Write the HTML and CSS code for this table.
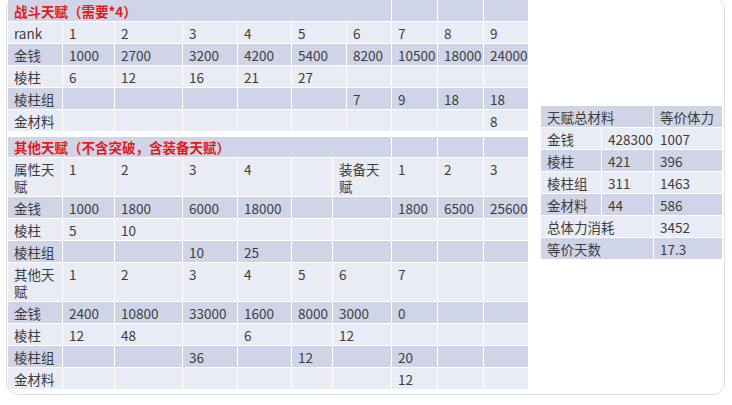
FILE: index.html
```html
<!DOCTYPE html>
<html lang="zh">
<head>
<meta charset="utf-8">
<title>天赋材料</title>
<link rel="stylesheet" href="styles.css">
</head>
<body>
<div class="card">
  <div class="left">
    <table class="sheet">
      <colgroup><col style="width:55px"><col style="width:52px"><col style="width:68px"><col style="width:55px"><col style="width:54px"><col style="width:55px"><col style="width:45px"><col style="width:46px"><col style="width:46px"><col style="width:45px"></colgroup>
      <tr><td colspan="7" class="title">战斗天赋（需要*4）</td><td></td><td></td><td></td></tr>
      <tr><td>rank</td><td>1</td><td>2</td><td>3</td><td>4</td><td>5</td><td>6</td><td>7</td><td>8</td><td>9</td></tr>
      <tr><td>金钱</td><td>1000</td><td>2700</td><td>3200</td><td>4200</td><td>5400</td><td>8200</td><td>10500</td><td>18000</td><td>24000</td></tr>
      <tr><td>棱柱</td><td>6</td><td>12</td><td>16</td><td>21</td><td>27</td><td></td><td></td><td></td><td></td></tr>
      <tr><td>棱柱组</td><td></td><td></td><td></td><td></td><td></td><td>7</td><td>9</td><td>18</td><td>18</td></tr>
      <tr><td>金材料</td><td></td><td></td><td></td><td></td><td></td><td></td><td></td><td></td><td>8</td></tr>
    </table>
    <table class="sheet">
      <colgroup><col style="width:55px"><col style="width:52px"><col style="width:68px"><col style="width:55px"><col style="width:54px"><col style="width:41px"><col style="width:59px"><col style="width:46px"><col style="width:46px"><col style="width:45px"></colgroup>
      <tr class="head"><td colspan="7" class="title">其他天赋（不含突破，含装备天赋）</td><td></td><td></td><td></td></tr>
      <tr><td>属性天赋</td><td>1</td><td>2</td><td>3</td><td>4</td><td></td><td>装备天赋</td><td>1</td><td>2</td><td>3</td></tr>
      <tr><td>金钱</td><td>1000</td><td>1800</td><td>6000</td><td>18000</td><td></td><td></td><td>1800</td><td>6500</td><td>25600</td></tr>
      <tr><td>棱柱</td><td>5</td><td>10</td><td></td><td></td><td></td><td></td><td></td><td></td><td></td></tr>
      <tr><td>棱柱组</td><td></td><td></td><td>10</td><td>25</td><td></td><td></td><td></td><td></td><td></td></tr>
      <tr><td>其他天赋</td><td>1</td><td>2</td><td>3</td><td>4</td><td>5</td><td>6</td><td>7</td><td></td><td></td></tr>
      <tr><td>金钱</td><td>2400</td><td>10800</td><td>33000</td><td>1600</td><td>8000</td><td>3000</td><td>0</td><td></td><td></td></tr>
      <tr><td>棱柱</td><td>12</td><td>48</td><td></td><td>6</td><td></td><td>12</td><td></td><td></td><td></td></tr>
      <tr><td>棱柱组</td><td></td><td></td><td>36</td><td></td><td>12</td><td></td><td>20</td><td></td><td></td></tr>
      <tr><td>金材料</td><td></td><td></td><td></td><td></td><td></td><td></td><td>12</td><td></td><td></td></tr>
    </table>
  </div>
  <table class="sheet total">
    <colgroup><col style="width:61px"><col style="width:52px"><col style="width:69px"></colgroup>
    <tr><td colspan="2">天赋总材料</td><td>等价体力</td></tr>
    <tr><td>金钱</td><td>428300</td><td>1007</td></tr>
    <tr><td>棱柱</td><td>421</td><td>396</td></tr>
    <tr><td>棱柱组</td><td>311</td><td>1463</td></tr>
    <tr><td>金材料</td><td>44</td><td>586</td></tr>
    <tr><td colspan="2">总体力消耗</td><td>3452</td></tr>
    <tr><td colspan="2">等价天数</td><td>17.3</td></tr>
  </table>
</div>
</body>
</html>
```
FILE: styles.css
```css
html, body {
  margin: 0;
  padding: 0;
  background: #ffffff;
  overflow: hidden;
}
body {
  font-family: "Noto Sans CJK SC", sans-serif;
  font-size: 13.5px;
  color: #3d3d3d;
}
.card {
  display: flex;
  align-items: flex-start;
  gap: 12px;
  margin: -3px 0 0 6px;
  width: 719px;
  height: 398px;
  box-sizing: border-box;
  border: 1px solid #dedede;
  border-radius: 12px;
  padding: 2px 0 0 1px;
  background: #fff;
}
.left {
  display: flex;
  flex-direction: column;
  gap: 5px;
  width: 521px;
}
.sheet {
  border-collapse: separate;
  border-spacing: 0;
  table-layout: fixed;
  width: 521px;
}
.sheet td {
  border-right: 1px solid #ffffff;
  border-bottom: 1px solid #ffffff;
  padding: 3px 3px 1px 6px;
  line-height: 17px;
  height: 17px;
  vertical-align: top;
  overflow: hidden;
}
.sheet .head td {
  padding-top: 2px;
}
.sheet tr:nth-child(odd) td {
  background: #cfd5e7;
}
.sheet tr:nth-child(even) td {
  background: #e9ebf5;
}
.sheet .title {
  color: #e5191c;
  font-weight: bold;
  font-size: 13.5px;
  white-space: nowrap;
}
.total {
  width: 182px;
  margin-top: 106px;
}
```
